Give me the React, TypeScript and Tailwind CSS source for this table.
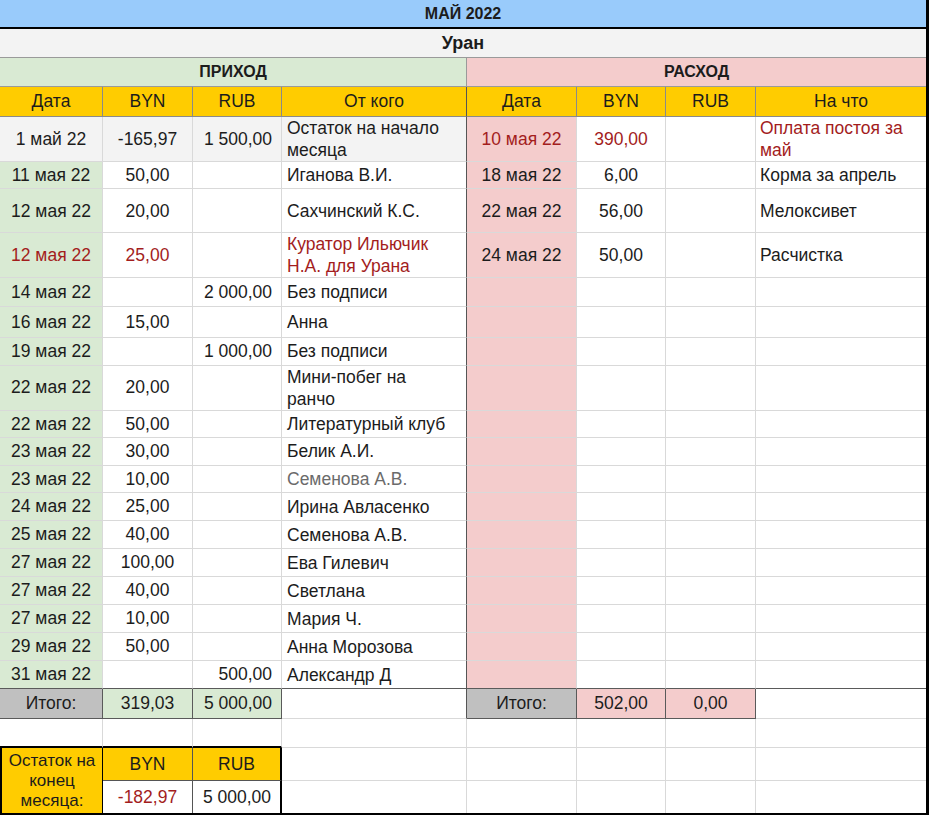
import React from "react"

type Row = {
  date: string
  byn: string
  rub: string
  text: string[]
  h: string
  red?: boolean
  gray?: boolean
  first?: boolean
}

const income: Row[] = [
  { date: "1 май 22", byn: "-165,97", rub: "1 500,00", text: ["Остаток на начало", "месяца"], h: "h-[45px]", first: true },
  { date: "11 мая 22", byn: "50,00", rub: "", text: ["Иганова В.И."], h: "h-[27px]" },
  { date: "12 мая 22", byn: "20,00", rub: "", text: ["Сахчинский К.С."], h: "h-[44px]" },
  { date: "12 мая 22", byn: "25,00", rub: "", text: ["Куратор Ильючик", "Н.А. для Урана"], h: "h-[45px]", red: true },
  { date: "14 мая 22", byn: "", rub: "2 000,00", text: ["Без подписи"], h: "h-[29px]" },
  { date: "16 мая 22", byn: "15,00", rub: "", text: ["Анна"], h: "h-[31px]" },
  { date: "19 мая 22", byn: "", rub: "1 000,00", text: ["Без подписи"], h: "h-[27px]" },
  { date: "22 мая 22", byn: "20,00", rub: "", text: ["Мини-побег на", "ранчо"], h: "h-[45px]" },
  { date: "22 мая 22", byn: "50,00", rub: "", text: ["Литературный клуб"], h: "h-[27px]" },
  { date: "23 мая 22", byn: "30,00", rub: "", text: ["Белик А.И."], h: "h-[28px]" },
  { date: "23 мая 22", byn: "10,00", rub: "", text: ["Семенова А.В."], h: "h-[27px]", gray: true },
  { date: "24 мая 22", byn: "25,00", rub: "", text: ["Ирина Авласенко"], h: "h-[28px]" },
  { date: "25 мая 22", byn: "40,00", rub: "", text: ["Семенова А.В."], h: "h-[28px]" },
  { date: "27 мая 22", byn: "100,00", rub: "", text: ["Ева Гилевич"], h: "h-[28px]" },
  { date: "27 мая 22", byn: "40,00", rub: "", text: ["Светлана"], h: "h-[28px]" },
  { date: "27 мая 22", byn: "10,00", rub: "", text: ["Мария Ч."], h: "h-[28px]" },
  { date: "29 мая 22", byn: "50,00", rub: "", text: ["Анна Морозова"], h: "h-[28px]" },
  { date: "31 мая 22", byn: "", rub: "500,00", text: ["Александр Д"], h: "h-[28px]" },
]

const expense = [
  { date: "10 мая 22", byn: "390,00", rub: "", text: ["Оплата постоя за", "май"], red: true },
  { date: "18 мая 22", byn: "6,00", rub: "", text: ["Корма за апрель"] },
  { date: "22 мая 22", byn: "56,00", rub: "", text: ["Мелоксивет"] },
  { date: "24 мая 22", byn: "50,00", rub: "", text: ["Расчистка"] },
]

// every cell draws only its right + bottom line
const cell = "border-r border-b border-[#d9d9d9] px-1 align-middle whitespace-nowrap overflow-hidden"
const head = "border-r border-b border-[#8a8a8a] bg-[#ffcc00] text-center align-middle"

function Lines({ lines }: { lines: string[] }) {
  return (
    <div className="leading-[22px]">
      {lines.map((l, i) => (
        <div key={i}>{l}</div>
      ))}
    </div>
  )
}

export default function App() {
  return (
    <div className="w-[929px] h-[815px] bg-white overflow-hidden font-['Liberation_Sans',Arial,sans-serif] text-[17.5px] text-[#1c1c1c]">
      <div className="w-[929px] border-r-[3px] border-b-[3px] border-black">
        <table className="w-[926px] table-fixed border-separate border-spacing-0">
          <colgroup>
            <col className="w-[103px]" />
            <col className="w-[90px]" />
            <col className="w-[89px]" />
            <col className="w-[185px]" />
            <col className="w-[110px]" />
            <col className="w-[89px]" />
            <col className="w-[90px]" />
            <col className="w-[170px]" />
          </colgroup>
          <tbody>
            <tr className="h-[29px]">
              <td colSpan={8} className="bg-[#99cbfb] border-b-2 border-black text-center font-bold text-[16px] align-middle">
                МАЙ 2022
              </td>
            </tr>
            <tr className="h-[29px]">
              <td colSpan={8} className="bg-[#f3f3f3] border-b border-[#9a9a9a] text-center font-bold text-[18px] align-middle">
                Уран
              </td>
            </tr>
            <tr className="h-[29px]">
              <td colSpan={4} className="bg-[#d9ead3] border-r border-b border-[#9a9a9a] text-center font-bold text-[16px] align-middle">
                ПРИХОД
              </td>
              <td colSpan={4} className="bg-[#f4cccc] border-b border-[#9a9a9a] text-center font-bold text-[16px] align-middle">
                РАСХОД
              </td>
            </tr>
            <tr className="h-[30px]">
              <td className={head}>Дата</td>
              <td className={head}>BYN</td>
              <td className={head}>RUB</td>
              <td className={head + " !border-r-[#555]"}>От кого</td>
              <td className={head}>Дата</td>
              <td className={head}>BYN</td>
              <td className={head}>RUB</td>
              <td className={head + " border-r-0"}>На что</td>
            </tr>

            {income.map((r, i) => {
              const ex = expense[i]
              const last = i === income.length - 1
              const bb = last ? " !border-b-[#5a5a5a]" : ""
              const rowBg = r.first ? "bg-[#f3f3f3]" : ""
              const tone = r.red ? "text-[#a31d1d]" : ""
              return (
                <tr key={i} className={r.h}>
                  <td className={`${cell}${bb} text-center ${r.first ? "bg-[#f3f3f3]" : "bg-[#d9ead3]"} ${tone}`}>{r.date}</td>
                  <td className={`${cell}${bb} text-center ${rowBg} ${tone}`}>{r.byn}</td>
                  <td className={`${cell}${bb} text-right pr-[9px] ${rowBg} ${tone}`}>{r.rub}</td>
                  <td className={`${cell}${bb} !border-r-[#555] pl-[5px] ${rowBg} ${r.red ? "text-[#a31d1d]" : r.gray ? "text-[#6b6b6b]" : ""}`}>
                    <Lines lines={r.text} />
                  </td>
                  <td className={`${cell}${bb} text-center bg-[#f4cccc] ${ex?.red ? "text-[#a31d1d]" : ""}`}>{ex?.date}</td>
                  <td className={`${cell}${bb} text-center ${ex?.red ? "text-[#a31d1d]" : ""}`}>{ex?.byn}</td>
                  <td className={`${cell}${bb} text-center`}>{ex?.rub}</td>
                  <td className={`${cell}${bb} border-r-0 pl-[4px] ${ex?.red ? "text-[#a31d1d]" : ""}`}>
                    {ex && <Lines lines={ex.text} />}
                  </td>
                </tr>
              )
            })}

            <tr className="h-[30px]">
              <td className={`${cell} !border-[#5a5a5a] text-center bg-[#c0c0c0]`}>Итого:</td>
              <td className={`${cell} !border-[#5a5a5a] text-center bg-[#d9ead3]`}>319,03</td>
              <td className={`${cell} !border-[#5a5a5a] text-right pr-[9px] bg-[#d9ead3]`}>5 000,00</td>
              <td className={`${cell} !border-r-[#555]`}></td>
              <td className={`${cell} !border-[#5a5a5a] text-center bg-[#c0c0c0]`}>Итого:</td>
              <td className={`${cell} !border-[#5a5a5a] text-center bg-[#f4cccc]`}>502,00</td>
              <td className={`${cell} !border-[#5a5a5a] text-center bg-[#f4cccc]`}>0,00</td>
              <td className={`${cell} border-r-0`}></td>
            </tr>

            <tr className="h-[29px]">
              <td className={`${cell} !border-b-black !border-b-2`}></td>
              <td className={`${cell} !border-b-black !border-b-2`}></td>
              <td className={`${cell} !border-b-black !border-b-2`}></td>
              <td className={cell}></td>
              <td className={cell}></td>
              <td className={cell}></td>
              <td className={cell}></td>
              <td className={`${cell} border-r-0`}></td>
            </tr>

            <tr className="h-[33px]">
              <td
                rowSpan={2}
                className="bg-[#ffcc00] border-l-2 border-r border-b-0 border-black text-center align-middle text-[17px] leading-[20px] whitespace-nowrap"
              >
                Остаток на
                <br />
                конец
                <br />
                месяца:
              </td>
              <td className="bg-[#ffcc00] border-r border-b border-[#555] text-center align-middle">BYN</td>
              <td className="bg-[#ffcc00] border-r-2 border-b border-r-black border-b-[#555] text-center align-middle">RUB</td>
              <td className={cell}></td>
              <td className={cell}></td>
              <td className={cell}></td>
              <td className={cell}></td>
              <td className={`${cell} border-r-0`}></td>
            </tr>
            <tr className="h-[32px]">
              <td className="border-r border-[#555] text-center align-middle text-[#a31d1d]">-182,97</td>
              <td className="border-r-2 border-black text-right pr-[9px] align-middle">5 000,00</td>
              <td className="border-r border-[#d9d9d9]"></td>
              <td className="border-r border-[#d9d9d9]"></td>
              <td className="border-r border-[#d9d9d9]"></td>
              <td className="border-r border-[#d9d9d9]"></td>
              <td></td>
            </tr>
          </tbody>
        </table>
      </div>
    </div>
  )
}
